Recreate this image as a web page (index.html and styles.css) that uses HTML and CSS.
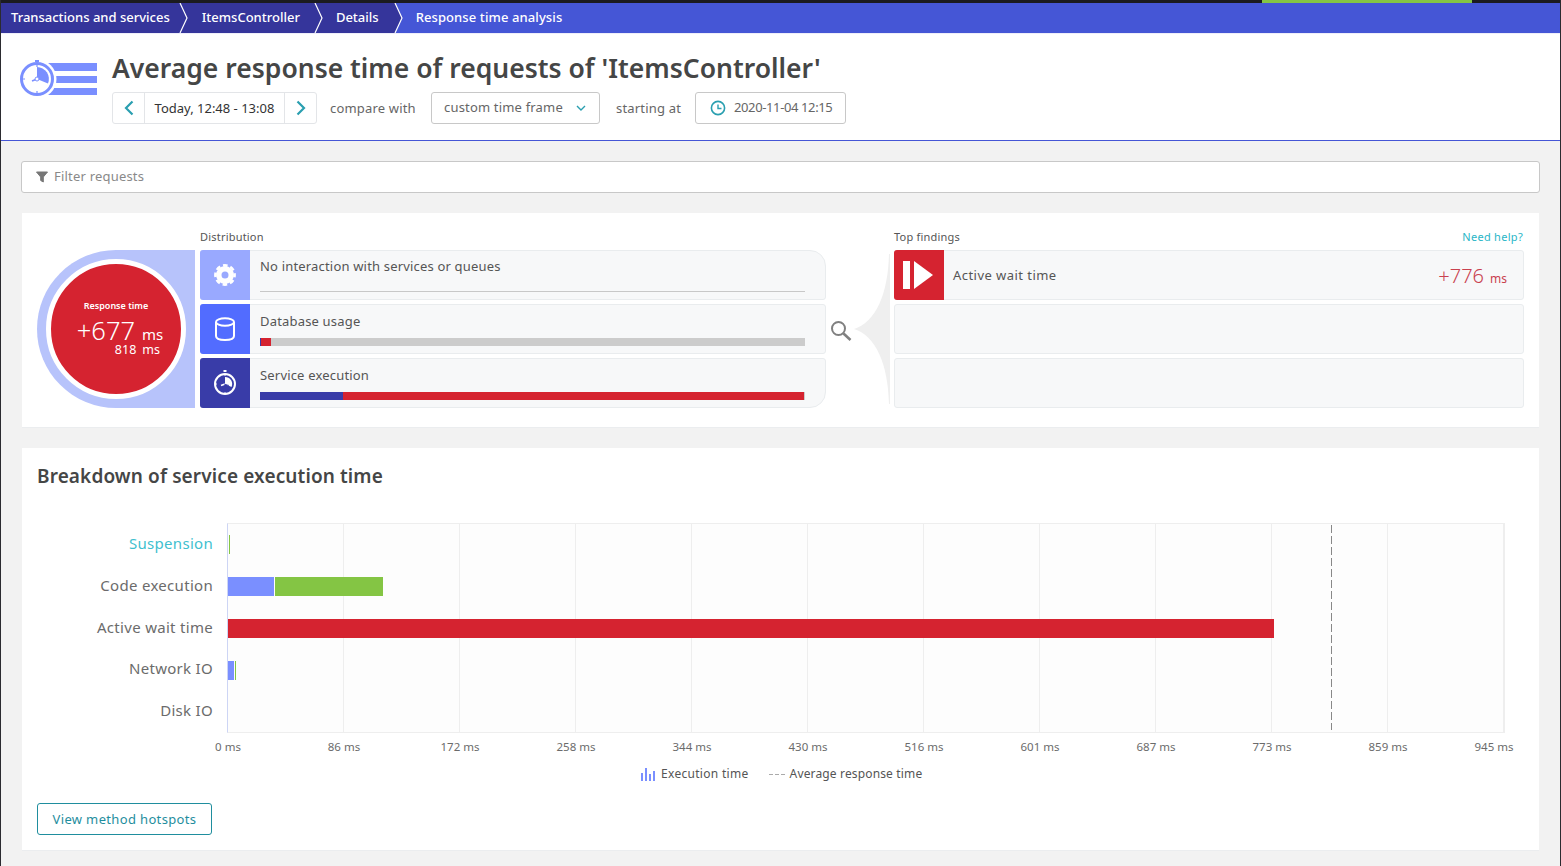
FILE: index.html
```html
<!DOCTYPE html>
<html>
<head>
  <title>Response time analysis</title>
  <link rel="stylesheet" href="styles.css">
</head>
<body>
  <div class="top-strip"><div class="top-strip-green"></div></div>

  <div class="crumbs">
    <a class="crumb crumb-first">Transactions and services</a>
    <svg class="crumb-sep" width="16" height="30"><path d="M0 0H8L15 15L8 30H0Z" fill="#35359b"/><path d="M8 0L15 15L8 30" fill="none" stroke="#fff" stroke-width="1.2"/></svg>
    <a class="crumb crumb-second">ItemsController</a>
    <svg class="crumb-sep" width="16" height="30"><path d="M0 0H8L15 15L8 30H0Z" fill="#35359b"/><path d="M8 0L15 15L8 30" fill="none" stroke="#fff" stroke-width="1.2"/></svg>
    <a class="crumb">Details</a>
    <svg class="crumb-sep" width="16" height="30"><path d="M0 0H8L15 15L8 30H0Z" fill="#35359b"/><path d="M8 0L15 15L8 30" fill="none" stroke="#fff" stroke-width="1.2"/></svg>
    <a class="crumb crumb-current">Response time analysis</a>
  </div>

  <div class="header">
    <svg class="header-icon" width="78" height="40" viewBox="0 0 78 40">
      <rect x="26" y="4" width="51" height="8" fill="#7a8fff"/>
      <rect x="26" y="17" width="51" height="7" fill="#7a8fff"/>
      <rect x="26" y="29" width="51" height="7" fill="#7a8fff"/>
      <circle cx="17" cy="20" r="19.5" fill="#fff"/>
      <rect x="15" y="1" width="4" height="2" fill="#7a8fff"/>
      <circle cx="17" cy="20" r="15.5" fill="#fff" stroke="#7a8fff" stroke-width="3"/>
      <path d="M17 20L17 8A12 12 0 0 1 28 24.5Z" fill="#7a8fff"/>
      <path d="M17 20L12 22" stroke="#7a8fff" stroke-width="1.6"/>
      <circle cx="17" cy="20" r="2" fill="#fff" stroke="#7a8fff" stroke-width="1"/>
      <path d="M17 6V8M17 32V34M3 20H5" stroke="#7a8fff" stroke-width="1.2"/>
    </svg>
    <div class="header-main">
      <h1 class="page-title">Average response time of requests of 'ItemsController'</h1>
      <div class="controls">
        <div class="timeframe">
          <button class="step-button">
            <svg width="12" height="16" viewBox="0 0 12 16"><path d="M9.5 1.5L3 8L9.5 14.5" fill="none" stroke="#2a9fb0" stroke-width="2.2"/></svg>
          </button>
          <div class="timeframe-text">Today, 12:48 - 13:08</div>
          <button class="step-button">
            <svg width="12" height="16" viewBox="0 0 12 16"><path d="M2.5 1.5L9 8L2.5 14.5" fill="none" stroke="#2a9fb0" stroke-width="2.2"/></svg>
          </button>
        </div>
        <span class="control-label compare-label">compare with</span>
        <div class="select-box">
          <span>custom time frame</span>
          <svg width="10" height="6" viewBox="0 0 10 6"><path d="M1 1L5 5L9 1" fill="none" stroke="#2a9fb0" stroke-width="1.4"/></svg>
        </div>
        <span class="control-label start-label">starting at</span>
        <div class="date-box">
          <svg width="16" height="16" viewBox="0 0 16 16"><circle cx="8" cy="8" r="6.6" fill="none" stroke="#2a9fb0" stroke-width="1.6"/><path d="M8 4.5V8.5H11.5" fill="none" stroke="#2a9fb0" stroke-width="1.4"/></svg>
          <span class="date-text">2020-11-04 12:15</span>
        </div>
      </div>
    </div>
  </div>

  <div class="filter-box">
    <svg width="12" height="12" viewBox="0 0 12 12"><path d="M0.5 1H11.5L7.3 6V11L4.7 9.5V6Z" fill="#777" stroke="#777" stroke-width="1"/></svg>
    <span class="filter-text">Filter requests</span>
  </div>

  <div class="card summary-card">
    <div class="gauge">
      <div class="gauge-circle">
        <div class="gauge-title">Response time</div>
        <div class="gauge-value">+677<span class="gauge-unit">ms</span></div>
        <div class="gauge-sub">818<span class="gauge-sub-unit">ms</span></div>
      </div>
    </div>

    <div class="distribution">
      <div class="small-title">Distribution</div>
      <div class="rows">
        <div class="row row-top">
          <div class="row-icon icon-light">
            <svg width="22" height="22" viewBox="0 0 22 22"><circle cx="11" cy="11" r="6.2" fill="none" stroke="#fff" stroke-width="5.4"/><circle cx="11" cy="11" r="9.6" fill="none" stroke="#fff" stroke-width="2.6" stroke-dasharray="4.6 2.94" stroke-dashoffset="2.3"/></svg>
          </div>
          <div class="row-body">
            <div class="row-label row-label-first">No interaction with services or queues</div>
            <div class="row-line"></div>
          </div>
        </div>
        <div class="row">
          <div class="row-icon icon-mid">
            <svg width="20" height="24" viewBox="0 0 20 24"><path d="M1 5V19C1 21.5 5 23 10 23C15 23 19 21.5 19 19V5" fill="none" stroke="#fff" stroke-width="2"/><ellipse cx="10" cy="5" rx="9" ry="3.8" fill="none" stroke="#fff" stroke-width="2"/></svg>
          </div>
          <div class="row-body">
            <div class="row-label">Database usage</div>
            <div class="row-bar">
              <div class="seg seg-dark" style="width:1px"></div>
              <div class="seg seg-red" style="width:10px"></div>
            </div>
          </div>
        </div>
        <div class="row row-bottom">
          <div class="row-icon icon-dark">
            <svg width="24" height="26" viewBox="0 0 24 26"><rect x="10.5" y="0" width="3" height="2" fill="#fff"/><circle cx="12" cy="14" r="10" fill="none" stroke="#fff" stroke-width="2"/><path d="M12 14L12 7A7 7 0 0 1 18.5 17Z" fill="#fff"/><path d="M12 14L8 15.5" stroke="#fff" stroke-width="1.4"/><path d="M11 14L16 15.5" stroke="#393ca8" stroke-width="0.8"/><path d="M12 5V6M12 22V23M3 14H4" stroke="#fff" stroke-width="1"/></svg>
          </div>
          <div class="row-body">
            <div class="row-label">Service execution</div>
            <div class="row-bar">
              <div class="seg seg-dark" style="width:83px"></div>
              <div class="seg seg-red" style="width:461px"></div>
            </div>
          </div>
        </div>
      </div>
    </div>

    <div class="connector">
      <svg class="magnifier" width="22" height="22" viewBox="0 0 22 22"><circle cx="8.5" cy="8.5" r="6.5" fill="none" stroke="#808080" stroke-width="2"/><path d="M13.5 13.5L20.5 20" stroke="#808080" stroke-width="2.6"/></svg>
      <svg width="36" height="150" viewBox="0 0 36 150"><path d="M35 0C34 40 22 68 0 75C22 82 34 110 35 150H36V0Z" fill="#efefef"/></svg>
    </div>

    <div class="findings">
      <div class="findings-head">
        <div class="small-title">Top findings</div>
        <a class="help-link">Need help?</a>
      </div>
      <div class="rows">
        <div class="row finding-row">
          <div class="row-icon icon-red">
            <svg width="32" height="28" viewBox="0 0 32 28"><rect x="0" y="0" width="7" height="28" fill="#fff"/><path d="M11 0L30 14L11 28Z" fill="#fff"/></svg>
          </div>
          <div class="finding-label">Active wait time</div>
          <div class="finding-value">+776<span class="finding-unit">ms</span></div>
        </div>
        <div class="row finding-row"></div>
        <div class="row finding-row"></div>
      </div>
    </div>
  </div>

  <div class="card chart-card">
    <h2 class="chart-title">Breakdown of service execution time</h2>

    <div class="chart">
      <div class="chart-labels">
        <div class="chart-label label-link">Suspension</div>
        <div class="chart-label">Code execution</div>
        <div class="chart-label">Active wait time</div>
        <div class="chart-label">Network IO</div>
        <div class="chart-label">Disk IO</div>
      </div>
      <div class="plot">
        <div class="plot-row"><div class="bar bar-green" style="width:1px;margin-left:1px"></div></div>
        <div class="plot-row">
          <div class="bar bar-blue" style="width:46px"></div>
          <div class="bar bar-green" style="width:108px"></div>
        </div>
        <div class="plot-row"><div class="bar bar-red" style="width:1046px"></div></div>
        <div class="plot-row">
          <div class="bar bar-blue" style="width:6px"></div>
          <div class="bar bar-green" style="width:1px"></div>
        </div>
        <div class="avg-line"></div>
      </div>
    </div>

    <div class="axis">
      <span class="tick">0 ms</span>
      <span class="tick">86 ms</span>
      <span class="tick">172 ms</span>
      <span class="tick">258 ms</span>
      <span class="tick">344 ms</span>
      <span class="tick">430 ms</span>
      <span class="tick">516 ms</span>
      <span class="tick">601 ms</span>
      <span class="tick">687 ms</span>
      <span class="tick">773 ms</span>
      <span class="tick">859 ms</span>
      <span class="tick tick-last">945 ms</span>
    </div>

    <div class="legend">
      <div class="legend-item">
        <svg width="14" height="13" viewBox="0 0 14 13"><path d="M0 5H2V13H0ZM4 0H6V13H4ZM8 6H10V13H8ZM12 3H14V13H12Z" fill="#7a8fff"/></svg>
        <span class="legend-exec">Execution time</span>
      </div>
      <div class="legend-item legend-avg">
        <span class="legend-dash"></span>
        <span>Average response time</span>
      </div>
    </div>

    <button class="hotspots-button">View method hotspots</button>
  </div>
</body>
</html>
```

FILE: styles.css
```css
*
{
  box-sizing: border-box;
}

html, body
{
  margin: 0;
  height: 866px;
  overflow: hidden;
}

body
{
  background-color: #f2f2f2;
  border-left: 1px solid #2b2b30;
  border-right: 1px solid #2b2b30;
  font-family: "Noto Sans", "Open Sans", sans-serif;
  font-size: 13px;
  color: #555;
}

.top-strip
{
  height: 3px;
  background-color: #1b1b20;
  padding-left: 1261px;
}

.top-strip-green
{
  width: 210px;
  height: 3px;
  background-color: #84c544;
}

/* breadcrumbs */

.crumbs
{
  height: 30px;
  display: flex;
  align-items: flex-start;
  background-color: #35359b;
  color: #fff;
  font-size: 13px;
  line-height: 28px;
}

.crumb
{
  white-space: nowrap;
  font-weight: 500;
  padding-left: 13px;
  padding-right: 8px;
}

.crumb-first
{
  padding-left: 10px;
  padding-right: 2px;
}

.crumb-second
{
  padding-left: 14px;
  padding-right: 7px;
}

.crumb-current
{
  flex: 1;
  height: 30px;
  background-color: #4556d6;
  letter-spacing: 0.1px;
}

.crumb-sep
{
  flex-shrink: 0;
  background-color: #35359b;
}

.crumb-sep:nth-last-child(2)
{
  background-color: #4556d6;
}

/* page header */

.header
{
  height: 108px;
  background-color: #fff;
  border-top: 1px solid #eeeefa;
  border-bottom: 1px solid #4556d6;
  display: flex;
  padding: 15px 0 0 19px;
}

.header-icon
{
  margin-top: 10px;
  flex-shrink: 0;
}

.header-main
{
  margin-left: 14px;
}

.page-title
{
  margin: 0;
  font-size: 26.5px;
  line-height: 38px;
  font-weight: 600;
  color: #454646;
}

.controls
{
  margin-top: 5px;
  display: flex;
  align-items: center;
  height: 32px;
}

.timeframe
{
  display: flex;
  height: 32px;
  width: 205px;
  border: 1px solid #e3e5e8;
  border-radius: 3px;
  color: #333;
}

.step-button
{
  width: 31px;
  padding: 0;
  border: none;
  background: none;
  display: flex;
  justify-content: center;
  align-items: center;
}

.timeframe-text
{
  flex: 1;
  text-align: center;
  line-height: 30px;
  white-space: nowrap;
  border-left: 1px solid #e3e5e8;
  border-right: 1px solid #e3e5e8;
}

.control-label
{
  color: #666;
  white-space: nowrap;
  letter-spacing: 0.18px;
}

.compare-label
{
  margin-left: 13px;
  width: 101px;
}

.start-label
{
  margin-left: 16px;
  width: 79px;
}

.select-box, .date-box
{
  height: 32px;
  border: 1px solid #c8c8c8;
  border-radius: 3px;
  display: flex;
  align-items: center;
  color: #666;
  white-space: nowrap;
}

.select-box span, .date-text, .filter-text
{
  padding-bottom: 2px;
}

.select-box
{
  width: 169px;
  padding: 0 13px 0 12px;
  justify-content: space-between;
  letter-spacing: 0.18px;
}

.date-box
{
  width: 151px;
  padding-left: 14px;
  gap: 8px;
}

.date-text
{
  letter-spacing: -0.38px;
}

/* filter */

.filter-box
{
  margin: 20px 20px 0;
  height: 32px;
  background-color: #fff;
  border: 1px solid #c8c8c8;
  border-radius: 3px;
  display: flex;
  align-items: center;
  padding-left: 14px;
  gap: 6px;
  color: #898989;
  letter-spacing: 0.2px;
}

/* cards */

.card
{
  margin: 20px 21px 0;
  background-color: #fff;
  border-bottom: 1px solid #ebedef;
}

.summary-card
{
  height: 215px;
  padding: 16px 15px 19px;
  display: flex;
  align-items: flex-end;
}

.gauge
{
  width: 158px;
  height: 158px;
  background-color: #b7c3fb;
  border-radius: 79px 0 0 79px;
  padding: 9px;
  flex-shrink: 0;
}

.gauge-circle
{
  width: 140px;
  height: 140px;
  border: 5px solid #fff;
  border-radius: 50%;
  background-color: #d52330;
  color: #fff;
  display: flex;
  flex-direction: column;
  align-items: center;
  padding-top: 35px;
}

.gauge-title
{
  font-size: 9px;
  line-height: 14px;
  font-weight: 600;
}

.gauge-value
{
  font-size: 25.5px;
  font-weight: 300;
  line-height: 21px;
  margin-top: 7px;
  margin-left: 8px;
  white-space: nowrap;
}

.gauge-unit
{
  font-size: 15px;
  font-weight: 400;
  margin-left: 7px;
}

.gauge-sub
{
  align-self: flex-end;
  margin-right: 21px;
  font-size: 12.5px;
  line-height: 10px;
  margin-top: 0;
}

.gauge-sub-unit
{
  margin-left: 6px;
}

.distribution
{
  width: 626px;
  margin-left: 5px;
  flex-shrink: 0;
}

.findings
{
  width: 630px;
  flex-shrink: 0;
}

.small-title
{
  font-size: 11px;
  line-height: 15px;
  height: 21px;
  letter-spacing: 0.2px;
  color: #555;
}

.findings-head
{
  display: flex;
  justify-content: space-between;
}

.help-link
{
  font-size: 11px;
  line-height: 15px;
  padding-right: 1px;
  letter-spacing: 0.3px;
  color: #2ab6c7;
}

.rows
{
  display: flex;
  flex-direction: column;
  gap: 4px;
}

.row
{
  height: 50px;
  display: flex;
  background-color: #f7f8f9;
  border: 1px solid #e9ecee;
  border-radius: 3px;
}

.row-top
{
  border-top-right-radius: 16px;
}

.row-bottom
{
  border-bottom-right-radius: 16px;
}

.row-icon
{
  width: 50px;
  height: 50px;
  margin: -1px 0 0 -1px;
  border-radius: 3px 0 0 3px;
  display: flex;
  justify-content: center;
  align-items: center;
  flex-shrink: 0;
}

.icon-light
{
  background-color: #99a9ff;
}

.icon-mid
{
  background-color: #526cff;
}

.icon-dark
{
  background-color: #393ca8;
}

.icon-red
{
  background-color: #d52330;
}

.row-body
{
  flex: 1;
  padding: 0 20px 0 10px;
}

.row-label
{
  line-height: 18px;
  padding-top: 7px;
  height: 33px;
  letter-spacing: 0.18px;
  color: #555;
}

.row-label-first
{
  padding-top: 6px;
}

.row-line
{
  height: 1px;
  margin-top: 7px;
  background-color: #c8c8c8;
}

.row-bar
{
  height: 8px;
  background-color: #ccc;
  display: flex;
}

.seg
{
  height: 8px;
}

.seg-dark
{
  background-color: #393ca8;
}

.seg-red
{
  background-color: #d52330;
}

.connector
{
  width: 68px;
  height: 158px;
  display: flex;
  align-items: center;
  justify-content: flex-end;
  padding-right: 4px;
  flex-shrink: 0;
}

.magnifier
{
  margin-right: 2px;
  margin-top: 4px;
}

.finding-row
{
  align-items: center;
}

.finding-row .row-icon
{
  align-self: flex-start;
}

.finding-label
{
  margin-left: 9px;
  letter-spacing: 0.45px;
  color: #555;
  flex: 1;
}

.finding-value
{
  margin-right: 16px;
  font-size: 20px;
  font-weight: 300;
  color: #c9414f;
}

.finding-unit
{
  font-size: 12px;
  font-weight: 400;
  margin-left: 6px;
}

/* chart */

.chart-card
{
  height: 403px;
  padding: 16px 15px 0;
}

.chart-title
{
  margin: 0;
  font-size: 19px;
  line-height: 24px;
  font-weight: 600;
  letter-spacing: 0.12px;
  color: #454646;
}

.chart
{
  margin-top: 35px;
  display: flex;
}

.chart-labels
{
  width: 176px;
  flex-shrink: 0;
}

.chart-label
{
  height: 41.8px;
  line-height: 40px;
  text-align: right;
  font-size: 15px;
  letter-spacing: 0.3px;
  color: #6b6b6b;
}

.label-link
{
  color: #3fbfcf;
}

.plot
{
  margin-left: 14px;
  width: 1278px;
  height: 210px;
  position: relative;
  background-color: #fdfdfd;
  background-image: repeating-linear-gradient(to right, #eeeeee 0, #eeeeee 1px, transparent 1px, transparent 116px);
  background-origin: border-box;
  border-top: 1px solid #eeeeee;
  border-right: 1px solid #eeeeee;
  border-bottom: 1px solid #eeeeee;
  border-left: 1px solid #cdd5f5;
}

.plot-row
{
  height: 41.8px;
  display: flex;
  align-items: center;
}

.bar
{
  height: 19px;
  margin-right: 1px;
}

.bar-blue
{
  background-color: #7a8fff;
}

.bar-green
{
  background-color: #84c544;
}

.bar-red
{
  background-color: #d52330;
}

.avg-line
{
  position: absolute;
  left: 1103px;
  top: 1px;
  bottom: 2px;
  width: 1px;
  background-image: repeating-linear-gradient(to bottom, #888 0, #888 8px, transparent 8px, transparent 11px);
}

.axis
{
  margin: 6px 0 0 133px;
  display: flex;
  height: 16px;
}

.tick
{
  width: 116px;
  flex-shrink: 0;
  text-align: center;
  font-size: 11.5px;
  line-height: 16px;
  color: #6b6b6b;
}

.tick-last
{
  margin-left: -10px;
}

.legend
{
  margin: 11px 0 0 604px;
  height: 16px;
  display: flex;
  font-size: 12px;
  line-height: 16px;
  color: #555;
}

.legend-item
{
  display: flex;
  align-items: center;
  gap: 6px;
  letter-spacing: 0.15px;
}

.legend-exec
{
  letter-spacing: 0.3px;
}

.legend-avg
{
  margin-left: 20px;
  gap: 5px;
}

.legend-dash
{
  width: 16px;
  height: 1px;
  background-image: repeating-linear-gradient(to right, #aaa 0, #aaa 4px, transparent 4px, transparent 6px);
}

.hotspots-button
{
  display: block;
  margin-top: 21px;
  width: 175px;
  height: 32px;
  background-color: #fff;
  border: 1px solid #1f8e9e;
  border-radius: 3px;
  color: #1f8e9e;
  font-family: inherit;
  font-size: 13px;
  letter-spacing: 0.35px;
  padding: 0;
}
```
